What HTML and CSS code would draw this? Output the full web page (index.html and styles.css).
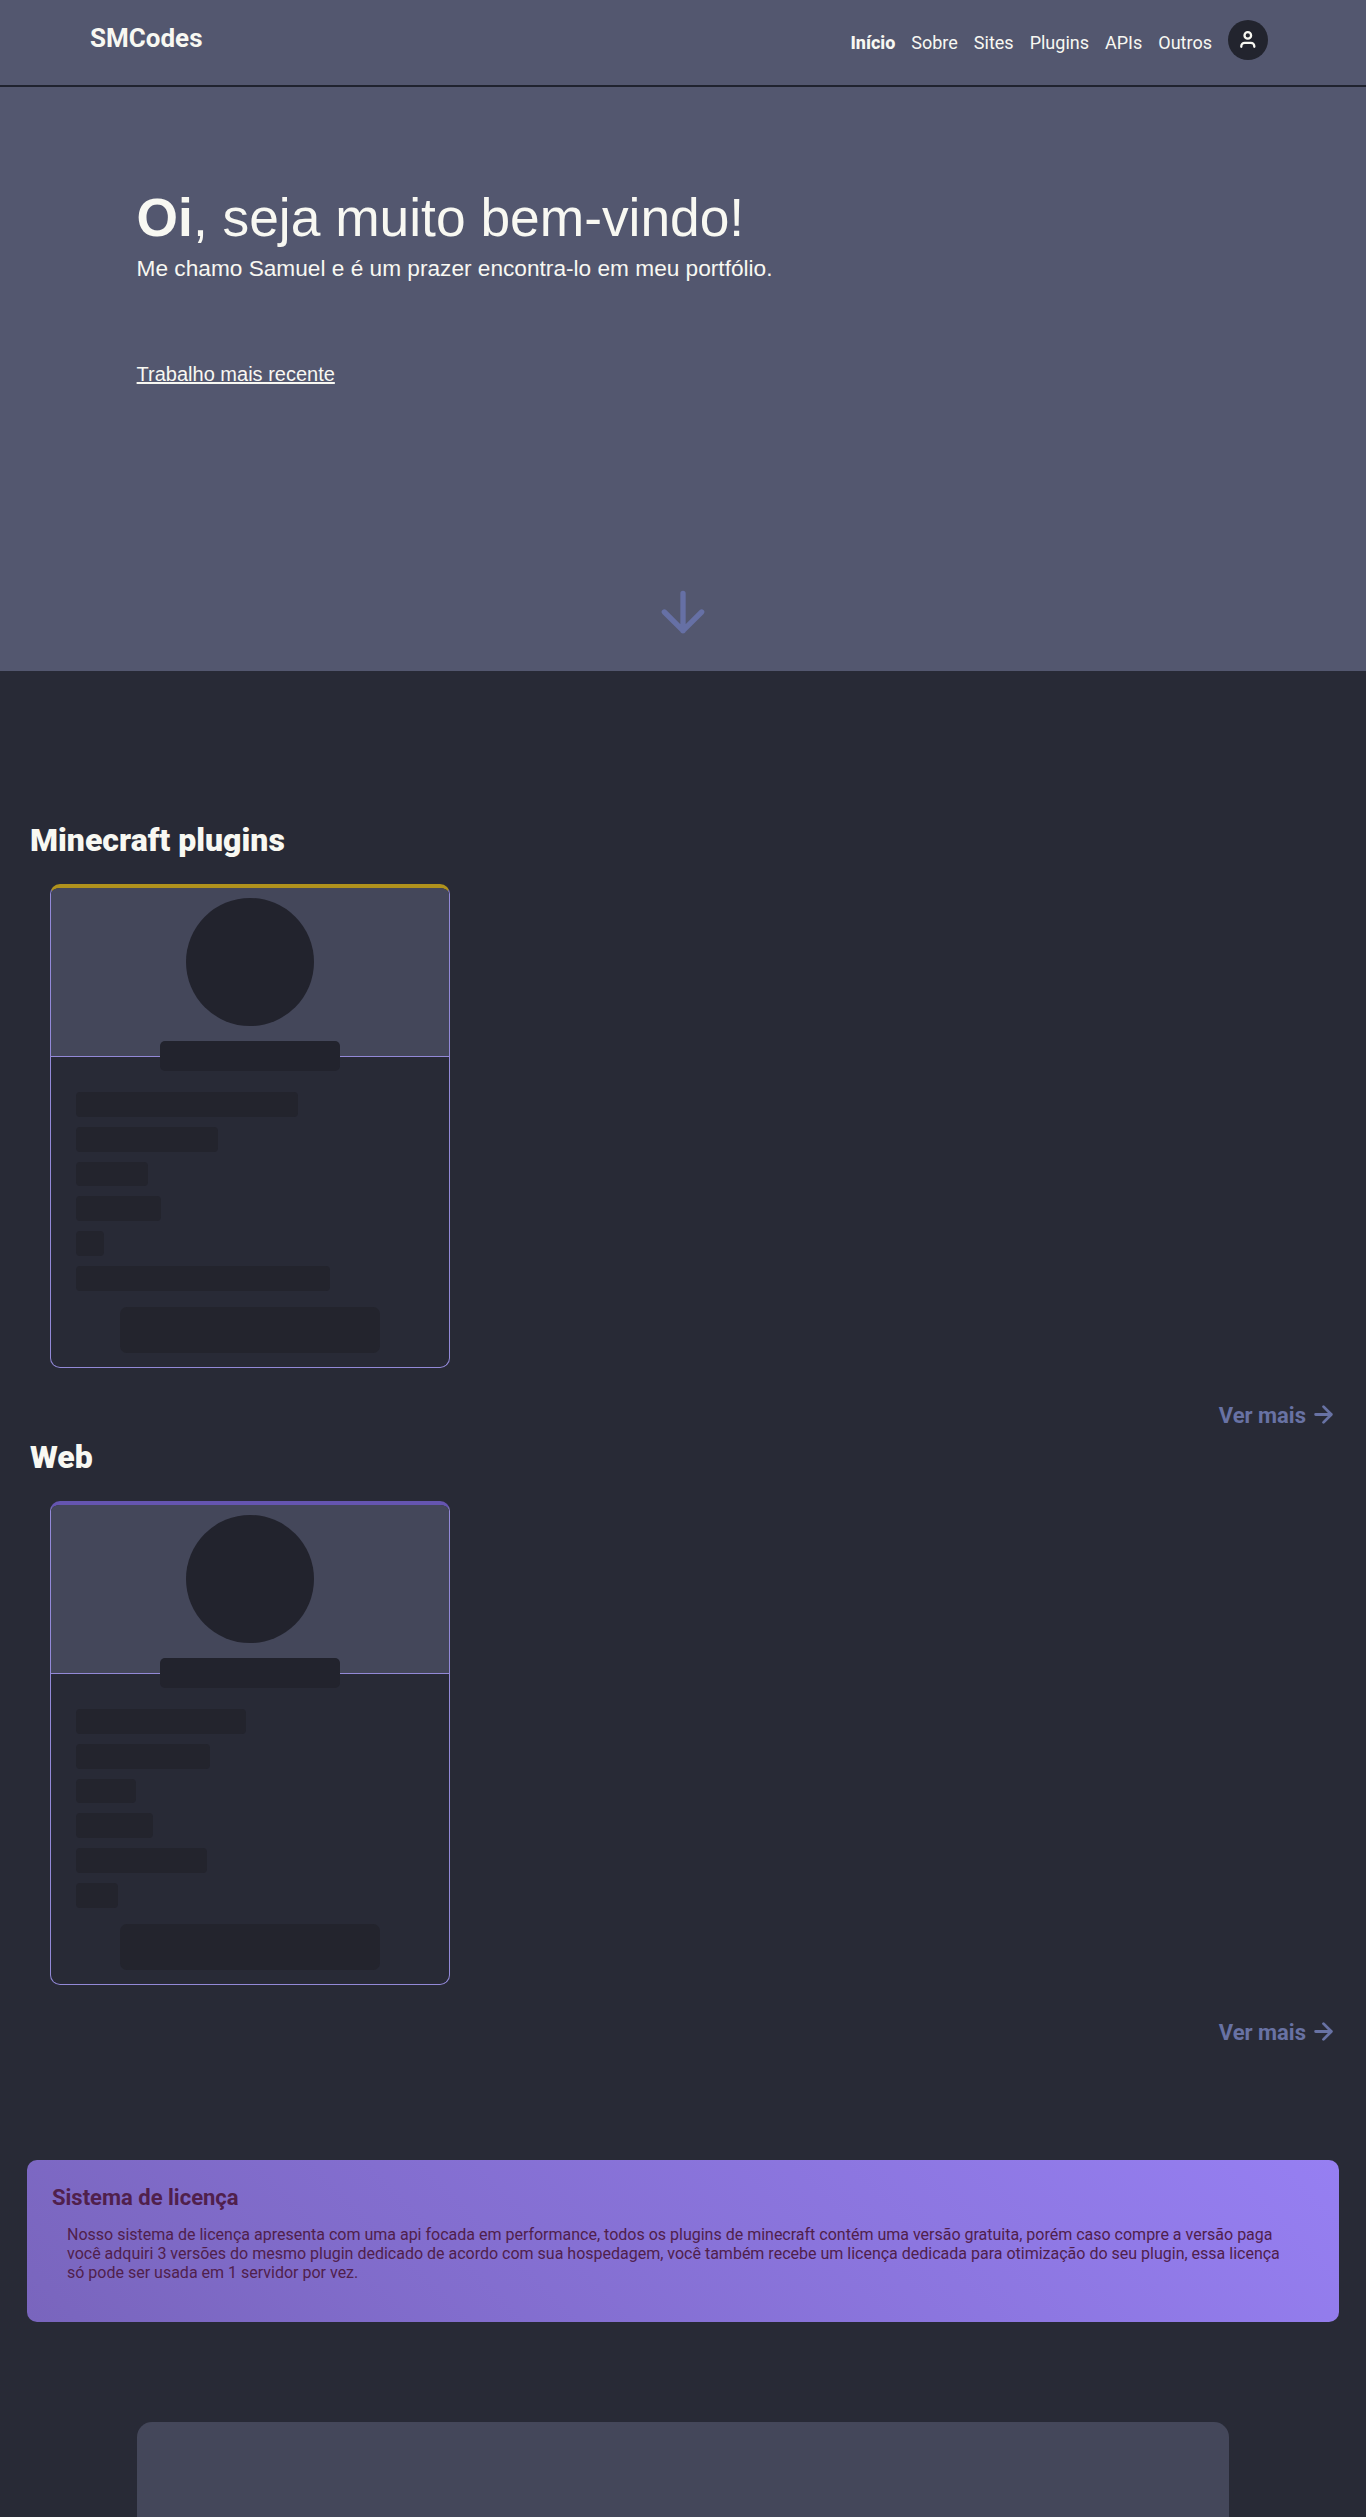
FILE: index.html
```html
<!DOCTYPE html>
<html lang="pt-BR">
<head>
<meta charset="utf-8">
<title>SMCodes</title>
<link rel="stylesheet" href="styles.css">
</head>
<body>
<header class="header">
  <div class="logo">SMCodes</div>
  <nav class="nav">
    <a class="active">Início</a><a>Sobre</a><a>Sites</a><a>Plugins</a><a>APIs</a><a>Outros</a>
    <div class="user">
      <svg width="20" height="20" viewBox="0 0 20 20" fill="none" stroke="currentColor" stroke-width="2.3" stroke-linecap="round"><circle cx="9.800" cy="5.400" r="3.300"/><path d="M3.300 16.800v-.6a3.400 3.400 0 0 1 3.400-3.400h6.200a3.400 3.400 0 0 1 3.400 3.400v.6"/></svg>
    </div>
  </nav>
</header>
<section class="hero">
  <h1><b>Oi</b>, seja muito bem-vindo!</h1>
  <p class="intro">Me chamo Samuel e é um prazer encontra-lo em meu portfólio.</p>
  <a class="recent">Trabalho mais recente</a>
  <svg class="down" width="64" height="64" viewBox="0 0 24 24" fill="none" stroke="currentColor" stroke-width="2" stroke-linecap="round" stroke-linejoin="round"><path d="M12 5v14M19 12l-7 7-7-7"/></svg>
</section>
<main>
  <section class="group">
    <h2>Minecraft plugins</h2>
    <article class="card gold">
      <div class="cover"><div class="avatar"></div><div class="name"></div></div>
      <div class="lines">
        <i style="width:222px"></i><i style="width:142px"></i><i style="width:72px"></i><i style="width:85px"></i><i style="width:28px"></i><i style="width:254px"></i>
      </div>
      <div class="button"></div>
    </article>
    <a class="more">Ver mais <svg width="27" height="27" viewBox="0 0 24 24" fill="none" stroke="currentColor" stroke-width="2.500" stroke-linecap="round" stroke-linejoin="round"><path d="M5 12h14M12 5l7 7-7 7"/></svg></a>
  </section>
  <section class="group">
    <h2>Web</h2>
    <article class="card violet">
      <div class="cover"><div class="avatar"></div><div class="name"></div></div>
      <div class="lines">
        <i style="width:170px"></i><i style="width:134px"></i><i style="width:60px"></i><i style="width:77px"></i><i style="width:131px"></i><i style="width:42px"></i>
      </div>
      <div class="button"></div>
    </article>
    <a class="more">Ver mais <svg width="27" height="27" viewBox="0 0 24 24" fill="none" stroke="currentColor" stroke-width="2.500" stroke-linecap="round" stroke-linejoin="round"><path d="M5 12h14M12 5l7 7-7 7"/></svg></a>
  </section>
  <section class="license">
    <h3>Sistema de licença</h3>
    <p>Nosso sistema de licença apresenta com uma api focada em performance, todos os plugins de minecraft contém uma versão gratuita, porém caso compre a versão paga você adquiri 3 versões do mesmo plugin dedicado de acordo com sua hospedagem, você também recebe um licença dedicada para otimização do seu plugin, essa licença só pode ser usada em 1 servidor por vez.</p>
  </section>
  <section class="panel"></section>
</main>
</body>
</html>
```
FILE: styles.css
```css
* { box-sizing: border-box; margin: 0; padding: 0; }
body {
  height: 2517px;
  overflow: hidden;
  background: #282a36;
  color: #f8f8f2;
  font-family: Roboto, sans-serif;
}
.header {
  height: 87px;
  padding: 20px 98px 0 90px;
  display: flex;
  justify-content: space-between;
  align-items: flex-start;
  background: #53576f;
  border-bottom: 2px solid #20232f;
}
.logo { font-size: 26px; line-height: 36px; font-weight: 700; }
.nav { display: flex; gap: 16px; font-size: 18px; line-height: 46px; }
.active { font-weight: 800; }
.user {
  width: 40px;
  height: 40px;
  border-radius: 50%;
  background: #22242e;
  display: flex;
  align-items: center;
  justify-content: center;
}
.hero {
  height: 584px;
  padding: 98px 136.6px 0;
  display: flex;
  flex-direction: column;
  align-items: flex-start;
  background: #53576f;
  font-family: "Liberation Sans", Arial, sans-serif;
}
h1 { font-size: 53.33px; line-height: 66px; font-weight: 400; white-space: nowrap; }
.intro { margin-top: 1px; font-size: 22.67px; line-height: 32px; }
.recent { margin-top: 78px; font-size: 20px; line-height: 24px; text-decoration: underline; }
.down { margin-top: 194px; align-self: center; color: #6670a5; }
.group { height: 617px; display: flex; flex-direction: column; }
.group:first-child { margin-top: 148px; }
h2 { margin-left: 30px; font-size: 32px; line-height: 42px; font-weight: 900; }
.card {
  width: 400px;
  height: 484px;
  margin: 23px 0 0 50px;
  border: 1px solid #9389d8;
  border-top-width: 4px;
  border-radius: 10px;
  overflow: hidden;
}
.card.gold { border-top-color: #b0921d; }
.card.violet { border-top-color: #6555b0; }
.cover {
  height: 169px;
  padding-top: 10px;
  display: flex;
  flex-direction: column;
  align-items: center;
  gap: 15px;
  background: #44475a;
  border-bottom: 1px solid #9389d8;
}
.avatar { flex: none; width: 128px; height: 128px; border-radius: 50%; background: #22232d; }
.name { flex: none; width: 180px; height: 30px; border-radius: 5px; background: #22232d; }
.lines { display: flex; flex-direction: column; gap: 10px; padding: 35px 0 0 25px; }
.lines i { height: 24.800px; border-radius: 4px; background: #23242d; }
.button { width: 260px; height: 46px; margin: 16px auto 0; border-radius: 7px; background: #23242d; }
.more {
  margin: 33px 29px 0 0;
  align-self: flex-end;
  display: flex;
  align-items: center;
  gap: 4px;
  color: #6872a4;
  font-size: 22px;
  line-height: 30px;
  font-weight: 700;
}
.more svg { margin-bottom: 3px; }
.license {
  width: 1312px;
  height: 162px;
  margin: 107px auto 0;
  padding: 24px 25px;
  border-radius: 10px;
  background: linear-gradient(45deg, #7965bd, #967ff2);
  color: #50204c;
}
h3 { font-size: 22px; line-height: 28px; font-weight: 700; }
.license p { margin: 13px 0 0 15px; width: 1222px; font-size: 16px; line-height: 19px; }
.panel { height: 95px; margin: 100px 137px 0; border-radius: 15px 15px 0 0; background: #44475a; }
```
